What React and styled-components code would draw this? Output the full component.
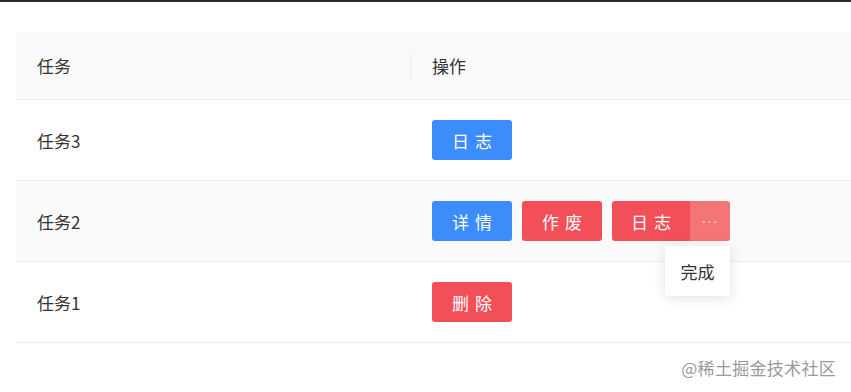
import { createGlobalStyle } from "styled-components";
import styled from "styled-components";

const GlobalStyle = createGlobalStyle`
  body {
    margin: 0;
    background: #fff;
    font-family: "Noto Sans CJK SC", "Noto Sans", sans-serif;
    color: #333;
  }
`;

const Page = styled.div`
  position: relative;
  height: 392px;
  border-top: 2px solid #2a2a2a;
  padding: 30px 0 0 16px;
  box-sizing: border-box;
  overflow: hidden;
`;

const Table = styled.div`
  display: flex;
  flex-direction: column;
  width: 835px;
`;

const Row = styled.div`
  display: grid;
  grid-template-columns: 395px 1fr;
  height: ${(p) => (p.header ? "67px" : "80px")};
  background: ${(p) => (p.shaded ? "#fafafa" : "#fff")};
  border-bottom: 1px solid #ebeef5;
`;

const Cell = styled.div`
  position: relative;
  display: flex;
  align-items: center;
  gap: 10px;
  padding-left: 21px;
  font-size: 17px;
  color: #333;

  ${(p) =>
    p.divider &&
    `&::after {
      content: "";
      position: absolute;
      right: 0;
      top: 20px;
      bottom: 19px;
      width: 1px;
      background: #ececec;
    }`}
`;

const Button = styled.button`
  height: 40px;
  width: ${(p) => p.w || 80}px;
  border: none;
  border-radius: 3px;
  background: ${(p) => (p.kind === "danger" ? "#f24f59" : "#3d8cfc")};
  color: #fff;
  font-family: inherit;
  font-size: 17px;
  letter-spacing: 6px;
  text-indent: 6px;
  padding: 0;
  cursor: pointer;
`;

const Split = styled.div`
  position: relative;
  display: flex;
`;

const SplitMain = styled(Button)`
  border-radius: 3px 0 0 3px;
`;

const SplitMore = styled.button`
  width: 40px;
  height: 40px;
  border: none;
  border-radius: 0 3px 3px 0;
  background: #f37576;
  color: #fde;
  font-size: 14px;
  letter-spacing: 1px;
  padding: 0;
  cursor: pointer;
`;

const Menu = styled.div`
  position: absolute;
  top: 45px;
  right: 0;
  width: 65px;
  height: 50px;
  background: #fff;
  box-shadow: 0 2px 12px rgba(0, 0, 0, 0.12);
  display: flex;
  align-items: center;
  justify-content: center;
  font-size: 17px;
  color: #333;
  z-index: 2;
`;

const Watermark = styled.div`
  position: absolute;
  right: 15px;
  bottom: 12px;
  font-size: 17px;
  color: #9a9a9a;
  letter-spacing: 0.3px;
`;

const App = () => (
  <>
    <GlobalStyle />
    <Page>
      <Table>
        <Row header shaded>
          <Cell divider>任务</Cell>
          <Cell>操作</Cell>
        </Row>
        <Row>
          <Cell>任务3</Cell>
          <Cell>
            <Button>日志</Button>
          </Cell>
        </Row>
        <Row shaded>
          <Cell>任务2</Cell>
          <Cell>
            <Button>详情</Button>
            <Button kind="danger">作废</Button>
            <Split>
              <SplitMain kind="danger" w={78}>日志</SplitMain>
              <SplitMore>···</SplitMore>
              <Menu>完成</Menu>
            </Split>
          </Cell>
        </Row>
        <Row>
          <Cell>任务1</Cell>
          <Cell>
            <Button kind="danger">删除</Button>
          </Cell>
        </Row>
      </Table>
      <Watermark>@稀土掘金技术社区</Watermark>
    </Page>
  </>
);

export default App;
